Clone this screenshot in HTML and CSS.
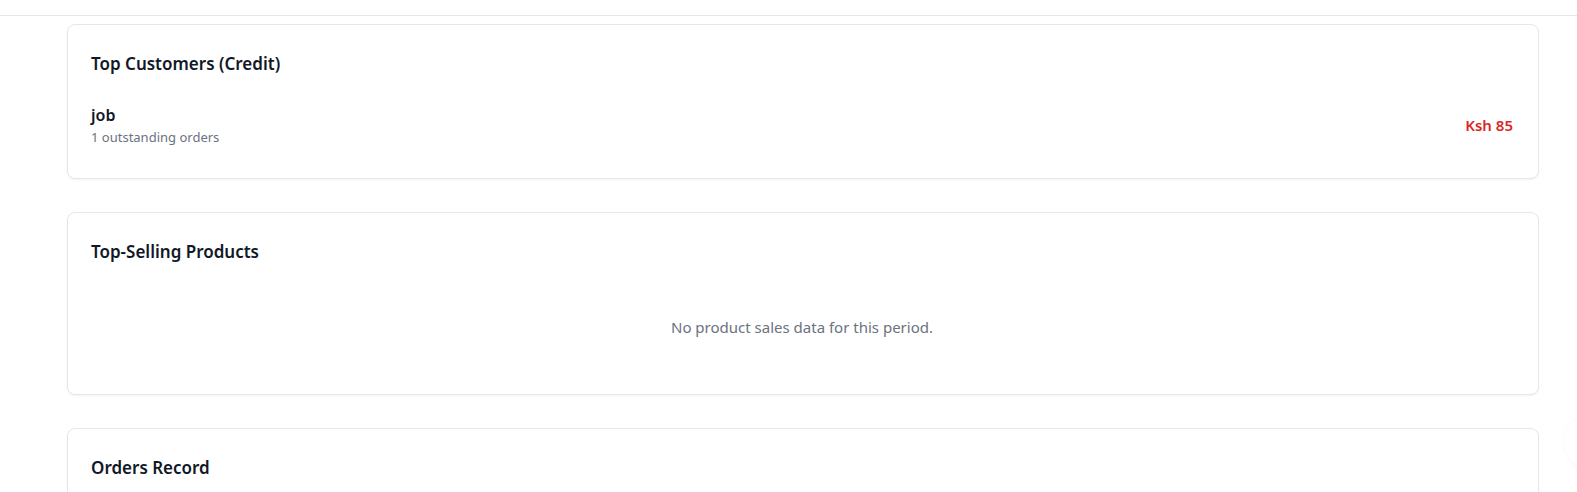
FILE: index.html
```html
<!DOCTYPE html>
<html lang="en">
<head>
<meta charset="utf-8">
<title>Reports</title>
<link rel="stylesheet" href="styles.css">
</head>
<body>
<header class="topbar"></header>
<main class="content">
  <section class="card">
    <h2 class="card-title">Top Customers (Credit)</h2>
    <div class="customer-list">
      <div class="customer-row">
        <div class="customer-info">
          <div class="customer-name">job</div>
          <div class="customer-meta">1 outstanding orders</div>
        </div>
        <div class="customer-amount">Ksh 85</div>
      </div>
    </div>
  </section>
  <section class="card">
    <h2 class="card-title">Top-Selling Products</h2>
    <p class="empty">No product sales data for this period.</p>
  </section>
  <section class="card card-last">
    <h2 class="card-title">Orders Record</h2>
  </section>
</main>
<div class="fab"></div>
</body>
</html>
```
FILE: styles.css
```css
* { box-sizing: border-box; }
html, body { margin: 0; padding: 0; background: #ffffff; }
body {
  font-family: "Noto Sans", "Open Sans", sans-serif;
  color: #111827;
  overflow: hidden;
  height: 492px;
}
.topbar {
  height: 16px;
  border-bottom: 1px solid #e5e7eb;
  background: #fff;
}
.content {
  padding: 8px 38px 0 67px;
  display: flex;
  flex-direction: column;
  gap: 33px;
}
.card {
  border: 1px solid #e5e7eb;
  border-radius: 8px;
  background: #fff;
  box-shadow: 0 1px 2px rgba(0,0,0,0.05);
  padding: 24px 25px 24px 23px;
}
.card-title {
  margin: 0;
  font-size: 17px;
  font-weight: 600;
  line-height: 30px;
  color: #111827;
}
.customer-list { padding: 24px 0 7px; }
.customer-row {
  display: flex;
  align-items: center;
  justify-content: space-between;
}
.customer-name {
  font-size: 16px;
  font-weight: 600;
  line-height: 24px;
}
.customer-meta {
  font-size: 13px;
  color: #6b7280;
  line-height: 20px;
}
.customer-amount {
  font-size: 15px;
  font-weight: 600;
  color: #dc2626;
}
.empty {
  margin: 49px 0 32px;
  text-align: center;
  font-size: 15px;
  color: #6b7280;
  line-height: 22px;
}
.card-last { height: 120px; }
.fab {
  position: absolute;
  right: -44px;
  top: 414px;
  width: 56px;
  height: 56px;
  border-radius: 50%;
  background: #fff;
  box-shadow: 0 1px 6px rgba(0,0,0,0.035);
}
```
